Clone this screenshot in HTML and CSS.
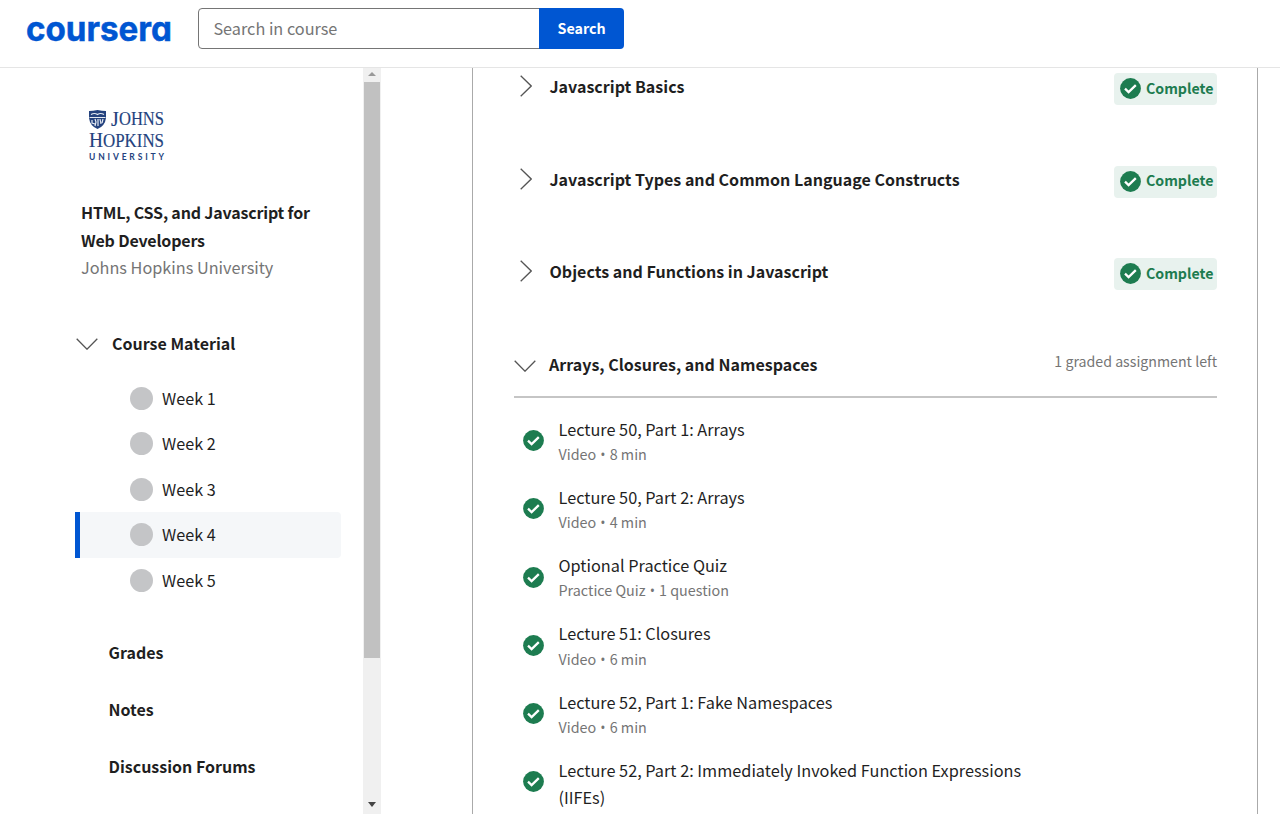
FILE: index.html
```html
<!DOCTYPE html>
<html lang="en">
<head>
<meta charset="utf-8">
<title>Coursera</title>
<link rel="stylesheet" href="styles.css">
</head>
<body>
<svg class="defs" aria-hidden="true">
  <symbol id="check" viewBox="0 0 21 21"><circle cx="10.5" cy="10.5" r="10.4" fill="#1d7c50"/><path d="M5 10.700l3.600 3.400L15.800 7.200" fill="none" stroke="#fff" stroke-width="2.300"/></symbol>
  <symbol id="right" viewBox="0 0 12 22"><path d="M.7.7L11.200 11 .7 21.300" fill="none" stroke="#555" stroke-width="1.300"/></symbol>
  <symbol id="down" viewBox="0 0 22 12"><path d="M.7.7L11 11.200 21.300.7" fill="none" stroke="#555" stroke-width="1.300"/></symbol>
</svg>
<header class="topbar">
  <svg class="logo" viewBox="0 0 147 40" role="img" aria-label="coursera"><text class="logo-text" x="0" y="32.700" textLength="146" lengthAdjust="spacingAndGlyphs">coursera</text></svg>
  <form class="search"><div class="field">Search in course</div><div class="button">Search</div></form>
</header>
<div class="page">
  <aside class="sidebar">
    <svg class="crest" viewBox="0 0 78 54" role="img" aria-label="Johns Hopkins University">
      <path d="M1 2Q5 2 9.500 1 14 2 18 2V9Q17 17 9.500 20 2 17 1 9z" fill="#24427e"/>
      <path d="M3 5.500q3.500-2 6.500 0 3-2 6.500 0M1.500 8.500h16M4 11v3l3 1M7 10l1 3-1 4M10 10v7M12 10l1 5M15 10l-1 4" fill="none" stroke="#e6ebf3" stroke-width="1.200"/>
      <g class="crest-serif"><text x="23" y="17" font-size="20" textLength="8">J</text><text x="31" y="16" font-size="18" textLength="45" lengthAdjust="spacingAndGlyphs">OHNS</text>
      <text x="1" y="38" font-size="21.500" textLength="14" lengthAdjust="spacingAndGlyphs">H</text><text x="15" y="38" font-size="18" textLength="61" lengthAdjust="spacingAndGlyphs">OPKINS</text></g>
      <text class="crest-sans" x="1" y="51" textLength="75">UNIVERSITY</text>
    </svg>
    <h1 class="course">HTML, CSS, and Javascript for<br>Web Developers</h1>
    <p class="school">Johns Hopkins University</p>
    <div class="material"><svg class="down"><use href="#down"/></svg><span>Course Material</span></div>
    <ul class="weeks">
      <li>Week 1</li><li>Week 2</li><li>Week 3</li><li class="active">Week 4</li><li>Week 5</li>
    </ul>
    <nav class="links"><a>Grades</a><a>Notes</a><a>Discussion Forums</a></nav>
  </aside>
  <div class="scrollbar"><i class="up"></i><div class="thumb"></div><i class="dn"></i></div>
  <main class="content">
    <section class="row"><svg class="right"><use href="#right"/></svg><h2>Javascript Basics</h2><span class="badge"><svg class="check"><use href="#check"/></svg>Complete</span></section>
    <section class="row"><svg class="right"><use href="#right"/></svg><h2>Javascript Types and Common Language Constructs</h2><span class="badge"><svg class="check"><use href="#check"/></svg>Complete</span></section>
    <section class="row"><svg class="right"><use href="#right"/></svg><h2>Objects and Functions in Javascript</h2><span class="badge"><svg class="check"><use href="#check"/></svg>Complete</span></section>
    <section class="row open"><svg class="down"><use href="#down"/></svg><h2>Arrays, Closures, and Namespaces</h2><span class="left">1 graded assignment left</span></section>
    <ul class="lessons">
      <li><svg class="check"><use href="#check"/></svg><div><p>Lecture 50, Part 1: Arrays</p><small>Video <b>•</b> 8 min</small></div></li>
      <li><svg class="check"><use href="#check"/></svg><div><p>Lecture 50, Part 2: Arrays</p><small>Video <b>•</b> 4 min</small></div></li>
      <li><svg class="check"><use href="#check"/></svg><div><p>Optional Practice Quiz</p><small>Practice Quiz <b>•</b> 1 question</small></div></li>
      <li><svg class="check"><use href="#check"/></svg><div><p>Lecture 51: Closures</p><small>Video <b>•</b> 6 min</small></div></li>
      <li><svg class="check"><use href="#check"/></svg><div><p>Lecture 52, Part 1: Fake Namespaces</p><small>Video <b>•</b> 6 min</small></div></li>
      <li><svg class="check"><use href="#check"/></svg><div><p>Lecture 52, Part 2: Immediately Invoked Function Expressions (IIFEs)</p></div></li>
    </ul>
  </main>
</div>
</body>
</html>
```
FILE: styles.css
```css
* { box-sizing: border-box; margin: 0; padding: 0; }
body { height: 814px; overflow: hidden; background: #fff; color: #1f1f1f; font: 16px/27.3px "Noto Sans CJK SC", sans-serif; display: flex; flex-direction: column; }
ul { list-style: none; }
svg { display: block; flex: none; }
.defs { position: absolute; width: 0; height: 0; }
.topbar { flex: none; height: 68px; border-bottom: 1px solid #e5e5e5; display: flex; align-items: flex-start; padding: 8px 0 0 26px; }
.logo { width: 147px; height: 40px; overflow: visible; }
.logo-text { font: 700 34px Inter, sans-serif; font-feature-settings: "cv11"; fill: #0056d2; stroke: #0056d2; stroke-width: .5px; }
.search { display: flex; margin-left: 25.400px; }
.field { width: 342px; height: 41px; border: 1px solid #757575; border-radius: 4px 0 0 4px; padding-left: 14px; font-size: 16.250px; line-height: 39px; color: #757575; }
.button { width: 84.500px; height: 41px; margin-left: -1px; background: #0056d2; color: #fff; border-radius: 0 4px 4px 0; text-align: center; font-size: 14.300px; font-weight: 700; line-height: 39px; }
.page { flex: 1; min-height: 0; display: flex; }
.sidebar { width: 363px; padding: 41px 22px 0 75px; overflow: hidden; flex: none; }
.crest { width: 78px; height: 54px; margin-left: 13px; overflow: visible; }
.crest-serif { font-family: "Liberation Serif", serif; fill: #24427e; stroke: #24427e; stroke-width: .15px; }
.crest-sans { font: 700 8.500px Lato, sans-serif; fill: #24427e; }
.course { font-size: 16px; font-weight: 700; line-height: 27.3px; letter-spacing: -.18px; margin: 36.300px 0 0 6px; white-space: nowrap; }
.school { margin-left: 6px; color: #757575; font-size: 16.250px; }
.material { display: flex; align-items: center; gap: 14px; padding-left: 1px; margin-top: 48.700px; font-weight: 700; }
.down { width: 22px; height: 12px; }
.weeks { margin-top: 18.500px; }
.weeks li { height: 45.500px; display: flex; align-items: center; gap: 9px; padding-left: 55px; font-size: 16.200px; }
.weeks li::before { content: ""; width: 23px; height: 23px; border-radius: 50%; background: #c4c5c7; }
.weeks .active { background: #f5f7f9; border-left: 5px solid #0056d2; padding-left: 50px; border-radius: 0 4px 4px 0; }
.links { display: flex; flex-direction: column; gap: 29.500px; margin: 36px 0 0 33.500px; font-weight: 700; }
.scrollbar { width: 18px; background: #f0f0f0; display: flex; flex-direction: column; align-items: center; flex: none; }
.up, .dn { border: 4px solid transparent; }
.up { border-top: 0; border-bottom-color: #999; margin: 4px 0 6px; }
.dn { border-bottom: 0; border-top: 5px solid #444; margin: auto 0 7px; }
.thumb { width: 16px; height: 576px; background: #c1c1c1; }
.content { width: 786px; margin-left: 91px; border-left: 1px solid #aaa; border-right: 1px solid #aaa; padding: 0 40px 0 41px; overflow: hidden; flex: none; }
.row { display: flex; height: 92.800px; align-items: flex-start; padding-top: 4.800px; }
.row h2 { font-size: 16.040px; line-height: 27.3px; font-weight: 700; }
.right { width: 12px; height: 22px; margin: 2px 18px 0 5.500px; }
.row .down { margin: 8.500px 13px 0 0; }
.badge { margin-left: auto; height: 32px; width: 103px; padding: 0 0 1px 6px; display: flex; align-items: center; gap: 5px; background: #e8f2ee; border-radius: 4px; color: #1d7c50; font-size: 14.200px; font-weight: 700; }
.check { width: 21px; height: 21px; }
.open { height: 51.500px; border-bottom: 2px solid #c5c5c5; }
.left { margin-left: auto; color: #757575; font-size: 14.200px; line-height: 21px; }
.lessons { padding: 17.700px 0 0 9.500px; }
.lessons li { height: 68.250px; display: flex; gap: 14px; }
.lessons .check { margin: 14.500px .5px 0 -.5px; }
.lessons p { width: 500px; font-size: 16.290px; }
.lessons small { display: block; font-size: 14.350px; line-height: 21px; color: #757575; }
.lessons b { font: 14px/1 "Open Sans", sans-serif; margin: 0 .9px; }
```
